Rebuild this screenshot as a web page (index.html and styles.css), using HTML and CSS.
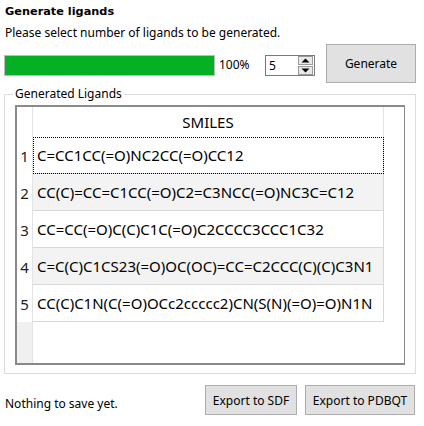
FILE: index.html
```html
<!DOCTYPE html>
<html>
<head>
<meta charset="utf-8">
<link rel="stylesheet" href="styles.css">
</head>
<body>
<div class="app">
  <div class="title">Generate ligands</div>
  <div class="subtitle">Please select number of ligands to be generated.</div>
  <div class="controls">
    <div class="progress"><div class="fill"></div></div>
    <div class="pct">100%</div>
    <div class="spin">
      <span class="spin-val">5</span>
      <div class="spin-btns">
        <div class="sb"><svg width="9" height="5" viewBox="0 0 9 5"><path d="M0.5 4.5 L4.5 0.5 L8.5 4.5 Z" fill="#000"/></svg></div>
        <div class="sb"><svg width="9" height="5" viewBox="0 0 9 5"><path d="M0.5 0.5 L4.5 4.5 L8.5 0.5 Z" fill="#000"/></svg></div>
      </div>
    </div>
    <button class="btn gen">Generate</button>
  </div>
  <fieldset class="group">
    <legend>Generated Ligands</legend>
    <div class="table">
      <div class="corner"></div>
      <div class="hhead">SMILES</div>
      <div class="hfill"></div>

      <div class="vh">1</div>
      <div class="cell focus">C=CC1CC(=O)NC2CC(=O)CC12</div>
      <div class="rfill"></div>

      <div class="vh">2</div>
      <div class="cell alt">CC(C)=CC=C1CC(=O)C2=C3NCC(=O)NC3C=C12</div>
      <div class="rfill"></div>

      <div class="vh">3</div>
      <div class="cell">CC=CC(=O)C(C)C1C(=O)C2CCCC3CCC1C32</div>
      <div class="rfill"></div>

      <div class="vh">4</div>
      <div class="cell alt">C=C(C)C1CS23(=O)OC(OC)=CC=C2CCC(C)(C)C3N1</div>
      <div class="rfill"></div>

      <div class="vh">5</div>
      <div class="cell">CC(C)C1N(C(=O)OCc2ccccc2)CN(S(N)(=O)=O)N1N</div>
      <div class="rfill"></div>

      <div class="vempty"></div>
      <div class="empty"></div>
      <div class="rfill"></div>
    </div>
  </fieldset>
  <div class="footer">
    <div class="status">Nothing to save yet.</div>
    <button class="btn exp1">Export to SDF</button>
    <button class="btn exp2">Export to PDBQT</button>
  </div>
</div>
</body>
</html>
```

FILE: styles.css
```css
html, body {
  margin: 0;
  padding: 0;
  background: #ffffff;
}
body {
  width: 424px;
  height: 426px;
  overflow: hidden;
  font-family: "Noto Sans", "DejaVu Sans", sans-serif;
  font-size: 12px;
  color: #000;
}
.app {
  display: flex;
  flex-direction: column;
  padding: 4px 0 0 0;
}
.title {
  font-family: "DejaVu Sans", sans-serif;
  font-weight: bold;
  font-size: 11.3px;
  line-height: 16px;
  padding-left: 5px;
}
.subtitle {
  line-height: 16px;
  margin-top: 5px;
  padding-left: 5px;
}
.controls {
  display: flex;
  align-items: flex-start;
  height: 39px;
  margin-top: 3px;
}
.progress {
  margin-left: 4px;
  margin-top: 11px;
  width: 209px;
  height: 19px;
  border: 1px solid #bcbcbc;
  background: #e6e6e6;
}
.fill {
  width: 100%;
  height: 100%;
  background: #06b025;
}
.pct {
  margin-left: 4px;
  margin-top: 13px;
  line-height: 16px;
  width: 46px;
}
.spin {
  margin-top: 11px;
  width: 48px;
  height: 19px;
  border: 1px solid #7a7a7a;
  background: #fff;
  display: flex;
  align-items: center;
  justify-content: space-between;
}
.spin-val {
  padding-left: 3px;
  line-height: 16px;
}
.spin-btns {
  display: flex;
  flex-direction: column;
  gap: 1px;
  margin-right: 1px;
}
.sb {
  width: 13px;
  height: 7px;
  border: 1px solid #9a9a9a;
  background: #e8e8e8;
  display: flex;
  align-items: center;
  justify-content: center;
}
.sb svg { display: block; }
.btn {
  font-family: "Noto Sans", "DejaVu Sans", sans-serif;
  font-size: 12px;
  background: #e1e1e1;
  border: 1px solid #adadad;
  color: #000;
  padding: 0;
  margin: 0;
}
.gen {
  margin-left: 11px;
  width: 90px;
  height: 39px;
}
.group {
  margin: 4px 0 0 4px;
  width: 412px;
  height: 287px;
  box-sizing: border-box;
  border: 1px solid #dcdcdc;
  padding: 4px 10px 8px 10px;
  min-width: 0;
}
.group legend {
  padding: 0 2px;
  margin-left: -2px;
  line-height: 14px;
}
.table {
  box-sizing: border-box;
  height: 260px;
  border: 2px solid #8a8a8a;
  border-right-width: 1px;
  display: grid;
  grid-template-columns: 16px 351px 1fr;
  grid-template-rows: 30px 37px 37px 37px 37px 37px 1fr;
  font-size: 15px;
  background: #fff;
}
.corner {
  border-right: 1px solid #e3e3e3;
}
.hhead {
  display: flex;
  align-items: center;
  justify-content: center;
  border-right: 1px solid #e3e3e3;
}
.vh {
  display: flex;
  align-items: center;
  justify-content: center;
  border-right: 1px solid #e3e3e3;
  color: #222;
}
.cell {
  display: flex;
  align-items: center;
  padding-left: 4px;
  border-right: 1px solid #d8d8d8;
  border-bottom: 1px solid #d8d8d8;
  white-space: nowrap;
  overflow: hidden;
  box-sizing: border-box;
}
.cell.alt { background: #f3f3f3; }
.cell.focus { outline: 1px dotted #000; outline-offset: -1px; }
.vempty {
  background: #f0f0f0;
  border-right: 1px solid #e3e3e3;
}
.footer {
  display: flex;
  align-items: center;
  margin-top: 11px;
  height: 30px;
}
.status {
  padding-left: 5px;
  flex: 1;
  line-height: 16px;
  margin-top: 8px;
}
.exp1 {
  width: 92px;
  height: 30px;
}
.exp2 {
  width: 110px;
  height: 30px;
  margin-left: 8px;
  margin-right: 9px;
}
```
